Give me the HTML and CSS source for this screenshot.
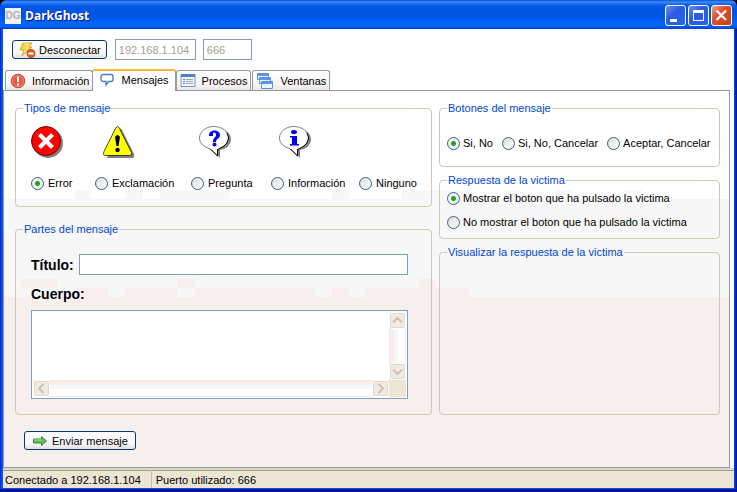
FILE: index.html
```html
<!DOCTYPE html>
<html lang="es">
<head>
<meta charset="utf-8">
<title>DarkGhost</title>
<link rel="stylesheet" href="styles.css">
</head>
<body>
<div class="window">
  <header class="titlebar">
    <span class="logo" aria-hidden="true">DG</span>
    <h1>DarkGhost</h1>
    <button class="caption" aria-label="Minimizar"><svg width="21" height="21" viewBox="0 0 21 21"><path d="M5 14h7v3H5z" fill="#fff"/></svg></button>
    <button class="caption" aria-label="Maximizar"><svg width="21" height="21" viewBox="0 0 21 21"><path d="M5 5h11v11H5zM6 8v7h9V8z" fill="#fff" fill-rule="evenodd"/></svg></button>
    <button class="caption close" aria-label="Cerrar"><svg width="21" height="21" viewBox="0 0 21 21"><path d="M5.500 5.500l9.500 9.500M15 5.500l-9.500 9.500" stroke="#fff" stroke-width="2.400"/></svg></button>
  </header>

  <main class="client">
    <div class="toolbar">
      <button class="btn">
        <svg width="18" height="16" viewBox="0 0 18 16"><path d="M5 1h9l-3 4h3L4 14l2-6H2z" fill="#fbd548" stroke="#e0ab2b"/><path d="M6 2h5L8 6h2L6 10" fill="none" stroke="#ffec91"/><circle cx="13" cy="11.500" r="4" fill="#dd6426" stroke="#bd4719"/><path d="M10.500 10.500h5v2h-5z" fill="#fff"/></svg>
        Desconectar</button>
      <input class="ip" type="text" value="192.168.1.104" aria-label="Dirección IP" disabled>
      <input class="port" type="text" value="666" aria-label="Puerto" disabled>
    </div>

    <nav class="tabs" role="tablist">
      <button class="tab first" role="tab"><svg width="16" height="16" viewBox="0 0 16 16"><circle cx="8" cy="8" r="6.800" fill="#e8573f" stroke="#cf4a3a"/><circle cx="8" cy="8" r="5.400" fill="none" stroke="#f28b73"/><path d="M7 3.500h2V9H7zM7 10.500h2v2H7z" fill="#fff"/></svg>Información</button>
      <button class="tab selected" role="tab" aria-selected="true"><svg width="16" height="16" viewBox="0 0 16 16"><path d="M4 2.500h8a2 2 0 0 1 2 2v3a2 2 0 0 1-2 2H9.500L7 13V9.500H4a2 2 0 0 1-2-2v-3a2 2 0 0 1 2-2z" fill="#fff" stroke="#4478ce" stroke-width="1.300"/></svg>Mensajes</button>
      <button class="tab" role="tab"><svg width="16" height="16" viewBox="0 0 16 16"><path d="M1 1.500h14v12H1z" fill="#f5f8fc" stroke="#6a94d0"/><path d="M1 1h14v3H1z" fill="#4d82ce"/><path d="M3 6.500h2M3 8.500h2M3 10.500h2" stroke="#4d82ce"/><path d="M6 6.500h7M6 8.500h7M6 10.500h7" stroke="#9aa5b4"/></svg>Procesos</button>
      <button class="tab" role="tab"><svg width="18" height="16" viewBox="0 0 18 16"><g fill="#eaf3ff" stroke="#5a8fdc"><path d="M1.500.5h11v6h-11z"/><path d="M3.500 4.500h11v6h-11z"/><path d="M5.500 8.500h11v7h-11z"/></g><path d="M1 1h12v2H1zM3 5h12v2H3zM5 9h12v2H5z" fill="#5b97e5"/></svg>Ventanas</button>
    </nav>

    <section class="panel">
      <svg class="bands" aria-hidden="true">
        <rect y="108" width="100%" height="100%" fill="#f7f7f7"/>
        <path d="M70 99h17v9H70zM121 99h18v9h-18zM156 99h34v9h-34zM190 99h35v9H190zM328 99h17v9h-17zM397 99h69v9h-69zM500 99h17v9h-17zM551 99h18v9h-18zM621 99h17v9h-17z" fill="#f7f7f7"/>
        <rect y="206" width="100%" height="100%" fill="#f7eeee"/>
        <path d="M18 188h35v9H18zM173 188h17v9h-17zM414 188h17v9h-17zM70 197h34v9H70zM121 197h52v9h-52zM190 197h121v9H190zM328 197h17v9h-17zM362 197h104v9H362z" fill="#f7eeee"/>
      </svg>

      <div class="columns">
        <div class="column">
          <fieldset class="types">
            <legend>Tipos de mensaje</legend>
            <label class="type first">
              <svg width="33" height="32" viewBox="0 0 33 32"><circle cx="17" cy="17" r="15" fill="#808080"/><circle cx="15" cy="15" r="14.500" fill="#f00" stroke="#800000"/><path d="M8.500 8.500l13 13M21.500 8.500l-13 13" stroke="#fff" stroke-width="4.200"/></svg>
              <span class="option"><input type="radio" name="tipo" checked>Error</span>
            </label>
            <label class="type">
              <svg width="33" height="32" viewBox="0 0 33 32"><path d="M16 2q2 0 3 2l12 24q1 4-2 4H4z" fill="#808080"/><path d="M12.500 2.500q2-4 4 0l12 24q1 3-2 3H3q-4 0-2-4z" fill="#ff0" stroke="#000" stroke-opacity=".7"/><path d="M12 11q2.500-4 5 0l-1.500 9h-2z"/><circle cx="14.500" cy="24" r="2.200"/></svg>
              <span class="option"><input type="radio" name="tipo">Exclamación</span>
            </label>
            <label class="type">
              <svg width="33" height="32" viewBox="0 0 33 32"><path d="M17 2c8 0 15 5 15 11s-5 10-11 11v8l-7-7z" fill="#808080"/><path d="M15 .5C7 .5.500 5.500.500 12c0 5 4 9 11 11l7 7v-6.500c6-1 11-6 11-11.500C29.500 5.500 23 .5 15 .5z" fill="#fff" stroke="#808080"/><path d="M28 7q4 7-3 13l-6.500 3.500V30l-7-7" fill="none" stroke="#000"/><path d="M10 9c0-6 11-6 11 0 0 4-4 3-4 7h-3c0-5 3-4 3-7 0-3-3-3-3-1v2h-4z" fill="#00f"/><circle cx="15.500" cy="18.500" r="2" fill="#00f"/></svg>
              <span class="option"><input type="radio" name="tipo">Pregunta</span>
            </label>
            <label class="type">
              <svg width="33" height="32" viewBox="0 0 33 32"><path d="M17 2c8 0 15 5 15 11s-5 10-11 11v8l-7-7z" fill="#808080"/><path d="M15 .5C7 .5.500 5.500.500 12c0 5 4 9 11 11l7 7v-6.500c6-1 11-6 11-11.500C29.500 5.500 23 .5 15 .5z" fill="#fff" stroke="#808080"/><path d="M28 7q4 7-3 13l-6.500 3.500V30l-7-7" fill="none" stroke="#000"/><ellipse cx="15" cy="6" rx="3" ry="2" fill="#00f"/><path d="M11 10h7v8h2v1.500h-9V18h2v-6.500h-2z" fill="#00f"/></svg>
              <span class="option"><input type="radio" name="tipo">Información</span>
            </label>
            <label class="type">
              <span class="option"><input type="radio" name="tipo">Ninguno</span>
            </label>
          </fieldset>

          <fieldset class="parts">
            <legend>Partes del mensaje</legend>
            <div class="row">
              <label for="titulo">Título:</label>
              <input id="titulo" type="text">
            </div>
            <label for="cuerpo">Cuerpo:</label>
            <div class="memo">
              <textarea id="cuerpo"></textarea>
              <div class="scroll vertical" aria-hidden="true">
                <span class="arrow"><svg width="15" height="15" viewBox="0 0 15 15"><path d="M3 9.500L7.500 5l4.500 4.500"/></svg></span>
                <span class="arrow"><svg width="15" height="15" viewBox="0 0 15 15"><path d="M3 5.500L7.500 10 12 5.500"/></svg></span>
              </div>
              <div class="scroll horizontal" aria-hidden="true">
                <span class="arrow"><svg width="15" height="15" viewBox="0 0 15 15"><path d="M9.500 3L5 7.500 9.500 12"/></svg></span>
                <span class="arrow"><svg width="15" height="15" viewBox="0 0 15 15"><path d="M5.500 3L10 7.500 5.500 12"/></svg></span>
              </div>
              <div class="corner"></div>
            </div>
          </fieldset>
        </div>

        <div class="column">
          <fieldset class="buttons">
            <legend>Botones del mensaje</legend>
            <label class="option"><input type="radio" name="botones" checked>Si, No</label>
            <label class="option"><input type="radio" name="botones">Si, No, Cancelar</label>
            <label class="option"><input type="radio" name="botones">Aceptar, Cancelar</label>
          </fieldset>
          <fieldset class="answer">
            <legend>Respuesta de la victima</legend>
            <label class="option"><input type="radio" name="respuesta" checked>Mostrar el boton que ha pulsado la victima</label>
            <label class="option"><input type="radio" name="respuesta">No mostrar el boton que ha pulsado la victima</label>
          </fieldset>
          <fieldset class="view">
            <legend>Visualizar la respuesta de la victima</legend>
          </fieldset>
        </div>
      </div>

      <button class="btn send">
        <svg width="16" height="14" viewBox="0 0 16 14"><path d="M1.500 5h8V2.500l5 4.500-5 4.500V9h-8z" fill="#5dbb55" stroke="#338a3c"/><path d="M2 6h8" stroke="#a5e09a"/></svg>
        Enviar mensaje</button>
    </section>
  </main>

  <footer class="status">
    <span>Conectado a 192.168.1.104</span>
    <span>Puerto utilizado: 666</span>
  </footer>
</div>
</body>
</html>
```
FILE: styles.css
```css
* { box-sizing: border-box; }

body {
  margin: 0;
  background: #000;
  color: #000;
  font: 11px/14px "Liberation Sans", Arial, sans-serif;
}

button, input, textarea { font: inherit; color: inherit; margin: 0; }
svg { display: block; flex: none; }

.window {
  display: flex;
  flex-direction: column;
  min-height: 100vh;
  padding: 0 3px 4px;
  border-radius: 7px 7px 0 0;
  background: linear-gradient(to right, #0019cf, #0a5cf0 2px, #0054e3 3px, #0054e3 calc(100% - 3px), #0030d8 calc(100% - 2px), #00138c);
  box-shadow: inset 0 -3px #00129c;
}

/* Title bar */
.titlebar {
  display: flex;
  align-items: center;
  gap: 2px;
  height: 29px;
  margin: 0 -3px;
  padding: 2px 5px 0;
  border-radius: 7px 7px 0 0;
  background: linear-gradient(#0a4fd0, #3c8cf8 2px, #0a5cf0 5px, #0054e0 9px, #0055e5 16px, #0066ff 24px, #0060f8 26px, #0042c8);
  color: #fff;
}
.titlebar h1 {
  flex: 1;
  margin: 0 2px;
  font: bold 12px/18px "Open Sans", sans-serif;
  text-shadow: 1px 1px #0f1089;
}
.logo {
  width: 16px;
  height: 16px;
  background: #f1f1f1;
  color: #b4b4b4;
  font: bold 10px/16px "Liberation Sans", sans-serif;
  text-align: center;
}
.caption {
  width: 21px;
  height: 21px;
  padding: 0;
  border: 1px solid #fff;
  border-radius: 3px;
  background: linear-gradient(135deg, #6b94f0, #2a5ce0 40%, #2464ee);
}
.caption svg { margin: -1px; }
.caption.close { background: linear-gradient(135deg, #f0a088, #e04e28 40%, #cc3c10); }

.client {
  flex: 1;
  display: flex;
  flex-direction: column;
  padding-right: 4px;
  background: #fff;
}

/* Toolbar */
.toolbar {
  display: flex;
  align-items: center;
  padding: 10px 9px 9px;
}
.btn {
  display: flex;
  align-items: center;
  gap: 3px;
  height: 19px;
  padding: 0 5px;
  border: 1px solid #003c74;
  border-radius: 3px;
  background: linear-gradient(#fff, #f8f6f6 70%, #e3dede);
}
input[type="text"] {
  height: 21px;
  padding: 0 3px;
  border: 1px solid #7f9db9;
  background: #fff;
}
.toolbar input:disabled { color: #a3a08c; }
.toolbar .ip { width: 81px; margin: 0 7px 0 8px; }
.toolbar .port { width: 49px; }

/* Tabs */
.tabs {
  display: flex;
  align-items: flex-end;
  padding-left: 2px;
  position: relative;
}
.tab {
  display: flex;
  align-items: center;
  gap: 6px;
  height: 20px;
  margin-right: 1px;
  padding: 0 3px;
  border: 1px solid #919b9c;
  border-bottom: 0;
  border-radius: 3px 3px 0 0;
  background: linear-gradient(#fff, #f8f5f5 70%, #ece6e6);
}
.tab.first { margin-right: -1px; padding-left: 4px; }
.tab.selected {
  z-index: 1;
  height: 22px;
  margin: 0 0 -1px;
  padding: 0 6px 3px;
  border-top: 2px solid #ffb52c;
  background: #fff;
}

/* Page */
.panel {
  position: relative;
  flex: 1;
  display: flex;
  flex-direction: column;
  align-items: flex-start;
  padding: 10px 9px 17px 11px;
  border: 1px solid #919b9c;
}
.bands {
  position: absolute;
  inset: 0;
  width: 100%;
  height: 100%;
}
.columns {
  position: relative;
  flex: 1;
  align-self: stretch;
  display: grid;
  grid-template-columns: minmax(0, 417fr) minmax(0, 281fr);
  gap: 7px;
}
.column {
  display: flex;
  flex-direction: column;
  gap: 7px;
}
fieldset {
  min-width: 0;
  margin: 0;
  border: 1px solid #d0c8b8;
  border-radius: 4px;
}
legend { padding: 0 1px; color: #0046d5; }

.option { display: flex; align-items: center; gap: 4px; white-space: nowrap; }
input[type="radio"] {
  appearance: none;
  flex: none;
  width: 13px;
  height: 13px;
  border: 1px solid #31618f;
  border-radius: 50%;
  background: linear-gradient(135deg, #dcdcd6, #fff);
}
input[type="radio"]:checked { background: radial-gradient(circle, #21a121 2px, #f4f4f0 3px); }

.types {
  display: grid;
  grid-template-columns: 64px 96px 80px 88px auto;
  margin-bottom: 8px;
  padding: 11px 0 16px 15px;
}
.types legend, .parts legend { margin-left: -8px; }
.type {
  display: flex;
  flex-direction: column;
  justify-content: flex-end;
  gap: 18px;
}
.type svg { margin-left: 8px; }
.type.first svg { margin-left: 0; }

.parts {
  flex: 1;
  display: flex;
  flex-direction: column;
  padding: 18px 23px 15px 15px;
}
.parts label { font-weight: bold; font-size: 14px; line-height: 16px; }
.row {
  display: flex;
  align-items: center;
  gap: 5px;
  margin-bottom: 11px;
}
.row input { flex: 1; min-width: 0; }

.memo {
  flex: 1;
  display: grid;
  grid-template-columns: 1fr 17px;
  grid-template-rows: 1fr 17px;
  min-height: 89px;
  margin-top: 8px;
  padding: 1px;
  border: 1px solid #7f9db9;
  background: #fff;
}
.memo textarea {
  width: 100%;
  min-width: 0;
  height: 100%;
  border: 0;
  padding: 2px;
  resize: none;
  background: #fff;
}
.scroll { display: flex; justify-content: space-between; }
.vertical { flex-direction: column; background: linear-gradient(to right, #eeede5 1px, #f7eeee 1px 5px, #f7f7f7 5px 9px, #fff 9px 16px, #eeede5 16px); }
.horizontal { background: linear-gradient(#eeede5 1px, #f7eeee 1px 5px, #f7f7f7 5px 9px, #fff 9px 16px, #eeede5 16px); }
.arrow {
  width: 17px;
  height: 17px;
  border: 1px solid #fff;
  border-radius: 3px;
  background: #efebe3;
  box-shadow: inset 0 0 0 1px #e0dac8;
}
.arrow path { fill: none; stroke: #c9c2b8; stroke-width: 2; }
.corner { background: #ece5d4; }

.buttons {
  display: flex;
  gap: 9px;
  padding: 21px 0 16px 7px;
}
.answer {
  display: flex;
  flex-direction: column;
  gap: 10px;
  padding: 4px 7px 9px;
}
.view { flex: 1; padding: 0 7px; }
.column:last-child { gap: 6px; }
.column:last-child .option { gap: 3px; }

.send {
  position: relative;
  gap: 4px;
  margin: 16px 0 0 9px;
  padding: 0 7px;
}

/* Status bar */
.status {
  display: flex;
  height: 20px;
  border-top: 2px solid #dcd8c8;
  box-shadow: inset 0 1px #a09c8c;
  background: #ece5d4;
  line-height: 20px;
}
.status span { padding: 0 10px 0 2px; }
.status span + span { padding-left: 4px; border-left: 1px solid #c5bfae; }
```
